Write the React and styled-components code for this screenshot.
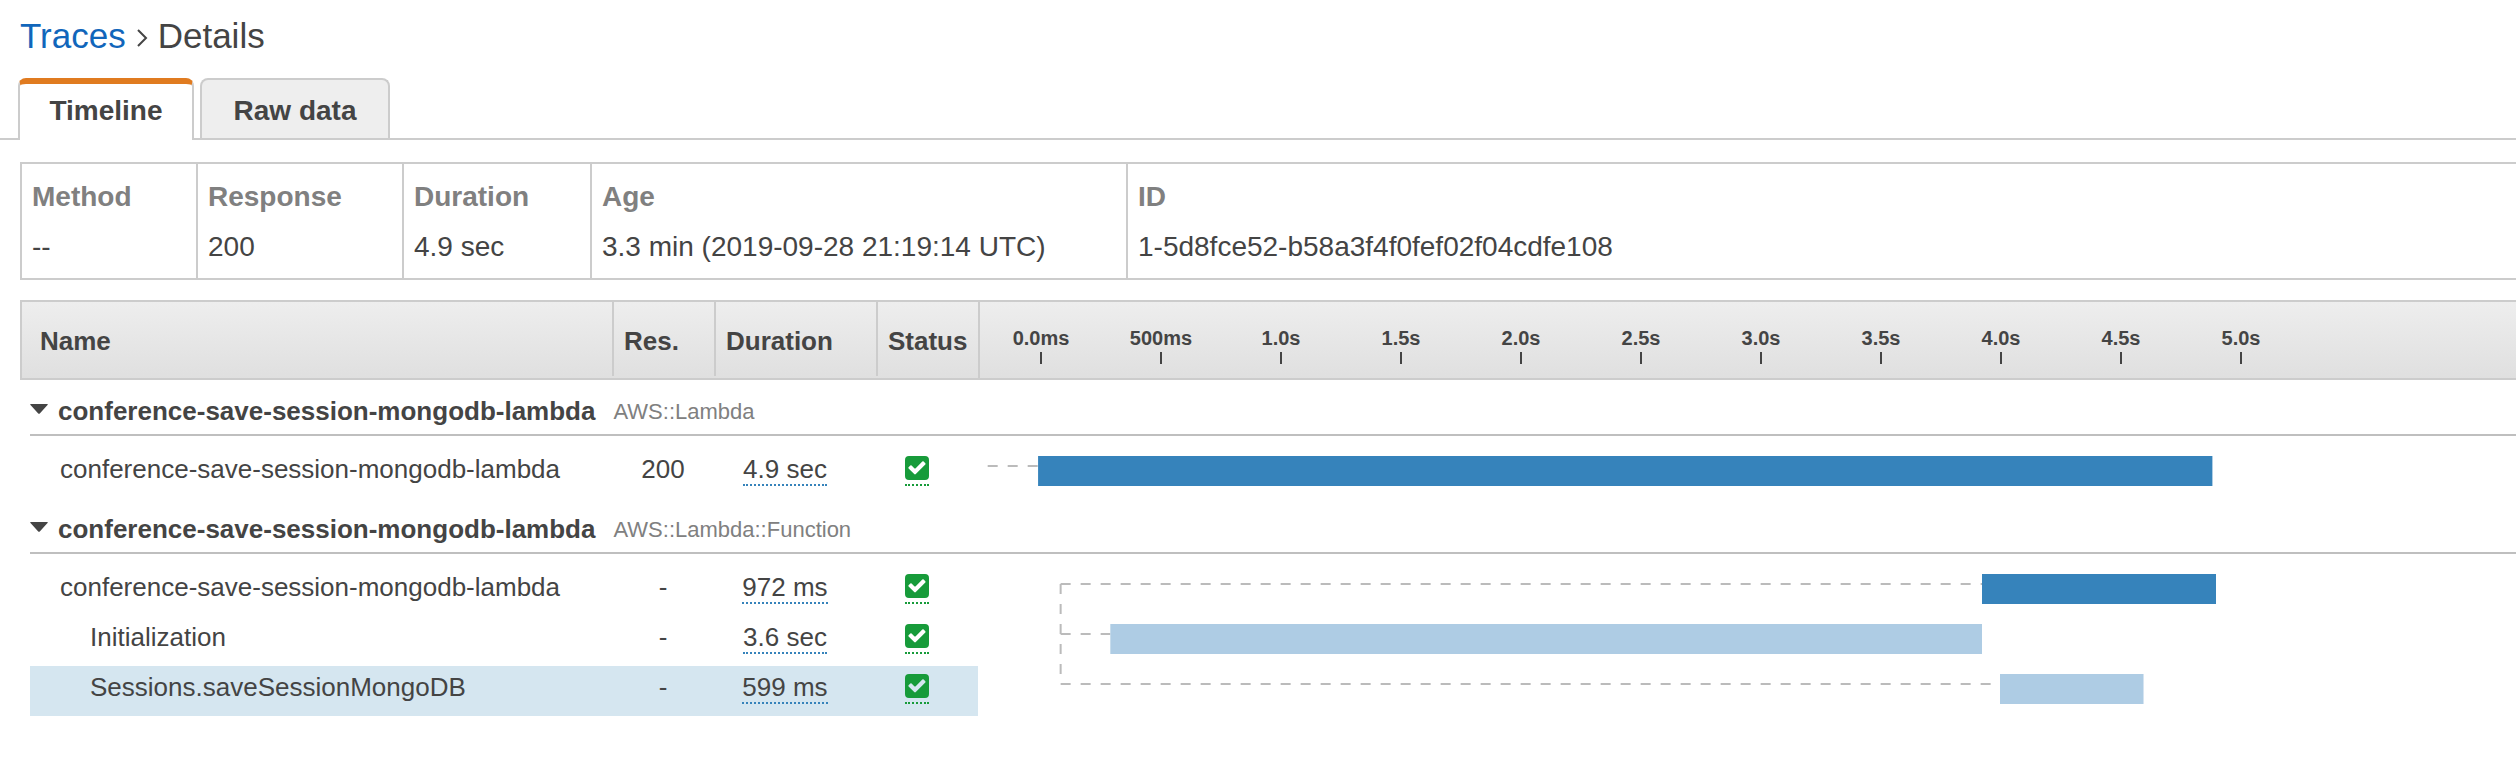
import React, { useState } from "react";
import styled, { createGlobalStyle } from "styled-components";

const GlobalStyle = createGlobalStyle`
  * { box-sizing: border-box; }
  body {
    margin: 0;
    background: #fff;
    color: #444;
    font-family: "Liberation Sans", Arial, sans-serif;
    font-size: 26px;
    overflow-x: hidden;
  }
  button { font: inherit; color: inherit; }
`;

const Page = styled.main`
  padding-top: 16px;
`;

const Breadcrumb = styled.nav`
  display: flex;
  align-items: center;
  gap: 10px;
  padding-left: 20px;
  font-size: 35px;
  line-height: 40px;
`;

const CrumbLink = styled.a`
  color: #1166bb;
  text-decoration: none;
`;

const Chevron = styled.svg`
  width: 12px;
  height: 18px;
  margin-top: 4px;
  fill: none;
  stroke: #444;
  stroke-width: 2;
`;

const TabList = styled.div`
  display: flex;
  gap: 6px;
  margin-top: 22px;
  padding-left: 18px;
  border-bottom: 2px solid #ccc;
`;

const Tab = styled.button`
  width: ${(p) => p.$width}px;
  height: ${(p) => (p.$active ? 62 : 60)}px;
  margin: 0 0 ${(p) => (p.$active ? -2 : 0)}px;
  padding: 4px 0 0;
  border: 2px solid #ccc;
  border-bottom: 0;
  border-radius: 8px 8px 0 0;
  background: ${(p) => (p.$active ? "#fff" : "#eee")};
  font-size: 28px;
  font-weight: bold;
  cursor: pointer;
  ${(p) => p.$active && `
    padding: 0 0 2px;
    border-top: 6px solid #e07b20;
  `}
`;

const Summary = styled.dl`
  display: grid;
  grid-template-columns: 174px 206px 188px 536px 1fr;
  margin: 22px 0 20px 20px;
  border: 2px solid #ccc;
  border-right: 0;
`;

const SummaryItem = styled.div`
  padding: 16px 10px 14px;
  font-size: 28px;
  line-height: 34px;
  & + & { border-left: 2px solid #ccc; }
`;

const Term = styled.dt`
  margin-bottom: 16px;
  color: #808080;
  font-weight: bold;
`;

const Value = styled.dd`
  margin: 0;
`;

const Trace = styled.table`
  width: calc(100% - 20px);
  margin-left: 20px;
  table-layout: fixed;
  border-spacing: 0;
`;

const Col = styled.col`
  width: ${(p) => p.$width};
`;

const HeadRow = styled.tr`
  background: linear-gradient(#eee, #dfdfdf);
`;

const HeadCell = styled.th`
  height: 80px;
  padding: 0;
  border: solid #ccc;
  border-width: 2px 0;
  text-align: left;
  vertical-align: top;
`;

const HeadLabel = styled.div`
  display: flex;
  align-items: center;
  height: ${(p) => (p.$full ? 76 : 74)}px;
  padding-top: ${(p) => (p.$full ? 2 : 4)}px;
  padding-left: ${(p) => (p.$full ? 18 : 10)}px;
  border-left: 2px solid #ccc;
`;

const Axis = styled.ol`
  display: flex;
  height: 76px;
  margin: 0;
  padding: 0 0 0 1px;
  border-left: 2px solid #ccc;
  list-style: none;
`;

const Tick = styled.li`
  display: flex;
  flex-direction: column;
  align-items: center;
  flex: 0 0 120px;
  padding-top: 24px;
  font-size: 20px;
  line-height: 24px;
  &::after {
    content: "";
    width: 2px;
    height: 12px;
    margin-top: 2px;
    background: #444;
  }
`;

const GroupCell = styled.th`
  padding: 0 0 12px 10px;
  text-align: left;
`;

const GroupTitle = styled.button`
  display: flex;
  align-items: center;
  width: 100%;
  height: 56px;
  padding: 8px 0 0;
  border: 0;
  border-bottom: 2px solid #bfbfbf;
  background: none;
  text-align: left;
  cursor: pointer;
`;

const Caret = styled.svg`
  width: 18px;
  height: 10px;
  margin: 0 10px 4px 0;
  transform: ${(p) => (p.$open ? "none" : "rotate(-90deg)")};
`;

const GroupName = styled.span`
  font-size: 26px;
  font-weight: bold;
`;

const GroupType = styled.span`
  margin-left: 18px;
  padding-top: 2px;
  color: #808080;
  font-size: 22px;
  font-weight: normal;
`;

const Cell = styled.td`
  height: 50px;
  padding: 0 ${(p) => (p.$shift ? 20 : 0)}px 0 0;
  background: ${(p) => (p.$selected ? "#d5e6f0" : "none")};
  text-align: center;
  vertical-align: top;
`;

const NameCell = styled(Cell)`
  padding: 0 0 0 10px;
  background-clip: content-box;
  text-align: left;
`;

const SpanName = styled.div`
  height: 50px;
  padding: 4px 0 0 ${(p) => 30 + p.$depth * 30}px;
  line-height: 34px;
`;

const Plain = styled.div`
  padding-top: 4px;
  line-height: 34px;
`;

const Duration = styled.span`
  display: inline-block;
  height: 34px;
  margin-top: 4px;
  border-bottom: 2px dotted #3683bb;
  line-height: 34px;
  vertical-align: top;
`;

const Status = styled.span`
  display: inline-block;
  width: 24px;
  height: 30px;
  margin-top: 8px;
  border-bottom: 2px dotted #179b3a;
  vertical-align: top;
`;

const Mark = styled.svg`
  display: block;
  width: 24px;
  height: 24px;
`;

const Lane = styled.svg`
  display: block;
  width: 100%;
  height: 50px;
  overflow: visible;
`;

const PX_PER_MS = 0.24;
const ORIGIN = 62;
const laneX = (ms) => ORIGIN + ms * PX_PER_MS;

const TABS = [
  { name: "Timeline", width: 176 },
  { name: "Raw data", width: 190 },
];

const TICKS = ["0.0ms", "500ms", "1.0s", "1.5s", "2.0s", "2.5s", "3.0s", "3.5s", "4.0s", "4.5s", "5.0s"];

const SUMMARY = [
  ["Method", "--"],
  ["Response", "200"],
  ["Duration", "4.9 sec"],
  ["Age", "3.3 min (2019-09-28 21:19:14 UTC)"],
  ["ID", "1-5d8fce52-b58a3f4f0fef02f04cdfe108"],
];

const GROUPS = [
  {
    name: "conference-save-session-mongodb-lambda",
    type: "AWS::Lambda",
    spans: [
      { name: "conference-save-session-mongodb-lambda", depth: 0, res: "200", duration: "4.9 sec", start: -8, end: 4885, lead: -218 },
    ],
  },
  {
    name: "conference-save-session-mongodb-lambda",
    type: "AWS::Lambda::Function",
    spans: [
      { name: "conference-save-session-mongodb-lambda", depth: 0, res: "-", duration: "972 ms", start: 3925, end: 4900, lead: 86, drop: 2 },
      { name: "Initialization", depth: 1, res: "-", duration: "3.6 sec", start: 293, end: 3925, lead: 86, light: true },
      { name: "Sessions.saveSessionMongoDB", depth: 1, res: "-", duration: "599 ms", start: 4000, end: 4598, lead: 86, light: true, selected: true },
    ],
  },
];

function CheckMark() {
  return (
    <Mark viewBox="0 0 24 24" role="img" aria-label="OK">
      <path
        fill="#179b3a"
        fillRule="evenodd"
        d="M4 0H20A4 4 0 0 1 24 4V20A4 4 0 0 1 20 24H4A4 4 0 0 1 0 20V4A4 4 0 0 1 4 0ZM3.6 11.2Q3 11.8 3.6 12.5L9.2 18.1Q10 18.8 10.8 18.1L20.3 8.6Q21 7.9 20.3 7.2L18.7 5.6Q18 5 17.3 5.6L10.7 12.2Q10 12.9 9.3 12.2L6.6 9.6Q6 9 5.3 9.6Z"
      />
    </Mark>
  );
}

function SpanLane({ span }) {
  const x = laneX(span.start);
  const leadX = laneX(span.lead);
  const dash = { stroke: "#bbb", strokeWidth: 2, strokeDasharray: "10 10" };
  return (
    <Lane aria-hidden="true">
      <line x1={leadX} x2={x} y1="18" y2="18" {...dash} />
      {span.drop && <line x1={leadX} x2={leadX} y1="18" y2={18 + span.drop * 50} {...dash} />}
      <rect x={x} y="8" width={laneX(span.end) - x} height="30" fill={span.light ? "#aecce4" : "#3683bb"} />
    </Lane>
  );
}

function SpanRow({ span }) {
  const selected = span.selected;
  return (
    <tr>
      <NameCell $selected={selected}><SpanName $depth={span.depth}>{span.name}</SpanName></NameCell>
      <Cell $selected={selected}><Plain>{span.res}</Plain></Cell>
      <Cell $selected={selected} $shift><Duration>{span.duration}</Duration></Cell>
      <Cell $selected={selected} $shift><Status><CheckMark /></Status></Cell>
      <Cell><SpanLane span={span} /></Cell>
    </tr>
  );
}

function Group({ group }) {
  const [open, setOpen] = useState(true);
  return (
    <tbody>
      <tr>
        <GroupCell colSpan={5} scope="rowgroup">
          <GroupTitle type="button" aria-expanded={open} onClick={() => setOpen(!open)}>
            <Caret $open={open} viewBox="0 0 18 10" aria-hidden="true">
              <path d="M1 0H17Q18.500 0 17.500 1L10 9.300Q9 10.300 8 9.300L.5 1Q-.5 0 1 0Z" fill="#444" />
            </Caret>
            <GroupName>{group.name}</GroupName>
            <GroupType>{group.type}</GroupType>
          </GroupTitle>
        </GroupCell>
      </tr>
      {open && group.spans.map((span) => <SpanRow key={span.name} span={span} />)}
    </tbody>
  );
}

export default function App() {
  const [tab, setTab] = useState("Timeline");
  return (
    <Page>
      <GlobalStyle />
      <Breadcrumb aria-label="Breadcrumb">
        <CrumbLink href="#traces">Traces</CrumbLink>
        <Chevron viewBox="0 0 12 18" aria-hidden="true">
          <path d="M2 1L10 9L2 17" />
        </Chevron>
        <span>Details</span>
      </Breadcrumb>
      <TabList role="tablist">
        {TABS.map(({ name, width }) => (
          <Tab key={name} type="button" role="tab" aria-selected={tab === name} $active={tab === name} $width={width} onClick={() => setTab(name)}>
            {name}
          </Tab>
        ))}
      </TabList>
      <Summary>
        {SUMMARY.map(([term, value]) => (
          <SummaryItem key={term}>
            <Term>{term}</Term>
            <Value>{value}</Value>
          </SummaryItem>
        ))}
      </Summary>
      <Trace>
        <colgroup>
          <Col $width="592px" />
          <Col $width="102px" />
          <Col $width="162px" />
          <Col $width="102px" />
          <Col $width="auto" />
        </colgroup>
        <thead>
          <HeadRow>
            <HeadCell scope="col"><HeadLabel $full>Name</HeadLabel></HeadCell>
            <HeadCell scope="col"><HeadLabel>Res.</HeadLabel></HeadCell>
            <HeadCell scope="col"><HeadLabel>Duration</HeadLabel></HeadCell>
            <HeadCell scope="col"><HeadLabel>Status</HeadLabel></HeadCell>
            <HeadCell scope="col">
              <Axis>
                {TICKS.map((tick) => <Tick key={tick}>{tick}</Tick>)}
              </Axis>
            </HeadCell>
          </HeadRow>
        </thead>
        {GROUPS.map((group) => <Group key={group.type} group={group} />)}
      </Trace>
    </Page>
  );
}
